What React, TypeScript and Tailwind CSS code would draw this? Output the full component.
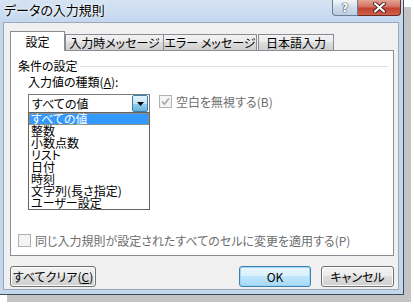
const items = ['すべての値', '整数', '小数点数', 'リスト', '日付', '時刻', '文字列(長さ指定)', 'ユーザー設定']

const CheckBox = ({ checked }: { checked?: boolean }) => (
  <div className="w-[13px] h-[13px] border border-[#b1b1b1] bg-[#f4f4f4] flex items-center justify-center shrink-0">
    {checked && (
      <svg width="9" height="9" viewBox="0 0 9 9">
        <path d="M1 4.5 L3.5 7 L8 1.5" fill="none" stroke="#a6a6a6" strokeWidth="1.6" />
      </svg>
    )}
  </div>
)

const Button = ({ children, width, primary }: { children: React.ReactNode; width: string; primary?: boolean }) => (
  <div
    className={`${width} h-[21px] rounded-[3px] border flex items-center justify-center text-[12px] leading-[12px] text-black ${
      primary
        ? 'border-[#3c7fb1] bg-[linear-gradient(#eaf6fd_0%,#d9f0fc_50%,#bee6fd_50%,#a7d9f5_100%)] shadow-[inset_0_0_0_1px_#9ed7f5]'
        : 'border-[#707070] bg-[linear-gradient(#f2f2f2_0%,#ebebeb_50%,#dddddd_50%,#cfcfcf_100%)] shadow-[inset_0_0_0_1px_#fcfcfc]'
    }`}
  >
    {children}
  </div>
)

export default function App() {
  return (
    <div className="w-[414px] h-[304px] bg-white overflow-hidden font-['Noto_Sans_CJK_JP','Noto_Sans',sans-serif] [font-feature-settings:'palt']">
      <div className="w-[404px] h-[295px] flex flex-col bg-[#c3d7ee] border-r border-b border-[#3f4a57] shadow-[7px_7px_0_#c4c4c4]">
        {/* title bar */}
        <div className="h-[22px] flex items-start justify-between pl-[4px] bg-[linear-gradient(#d5e3f3,#c3d7ee)]">
          <span className="pt-[2px] text-[13px] leading-[16px] text-black [text-shadow:0_0_5px_#fff,0_0_2px_#fff]">
            データの入力規則
          </span>
          <div className="flex mr-[2px]">
            <div className="w-[26px] h-[16px] rounded-bl-[4px] border border-t-0 border-[#6b7c93] bg-[linear-gradient(#f3f6fa,#d0dcec_50%,#bccde3)] flex items-center justify-center">
              <span className="text-[12px] leading-[12px] font-bold text-white font-['DejaVu_Sans',sans-serif] [text-shadow:0_0_1px_#3a4350,0_0_1px_#3a4350,0_0_1px_#3a4350]">
                ?
              </span>
            </div>
            <div className="w-[43px] h-[16px] rounded-br-[4px] border border-t-0 border-l-0 border-[#6b2a22] bg-[linear-gradient(#e7a394,#d0705f_45%,#c2412e_55%,#d0604c)] flex items-center justify-center">
              <svg width="15" height="11" viewBox="0 0 15 11">
                <path d="M3 1.5 L12 9.5 M12 1.5 L3 9.5" stroke="#4a2a26" strokeWidth="4" strokeLinecap="round" />
                <path d="M3 1.5 L12 9.5 M12 1.5 L3 9.5" stroke="#ffffff" strokeWidth="2" strokeLinecap="round" />
              </svg>
            </div>
          </div>
        </div>

        {/* client area */}
        <div className="ml-[3px] w-[396px] h-[268px] bg-[#f0f0f0] border border-[#9ba8b9] flex flex-col text-[12px] leading-[12px] text-black">
          {/* tabs */}
          <div className="flex items-end h-[27px] pl-[6px]">
            <div className="relative z-10 w-[55px] h-[20px] mb-[-1px] bg-white border border-b-0 border-[#898c95] flex items-center justify-center">
              設定
            </div>
            <div className="w-[99px] h-[16px] border border-b-0 border-[#898c95] bg-[linear-gradient(#f2f2f2,#ebebeb_50%,#dddddd_50%,#cfcfcf)] flex items-center justify-center">
              入力時メッセージ
            </div>
            <div className="w-[93px] h-[16px] border border-b-0 border-l-0 border-[#898c95] bg-[linear-gradient(#f2f2f2,#ebebeb_50%,#dddddd_50%,#cfcfcf)] flex items-center justify-center">
              エラー メッセージ
            </div>
            <div className="w-[76px] h-[16px] ml-[1px] border border-b-0 border-[#898c95] bg-[linear-gradient(#f2f2f2,#ebebeb_50%,#dddddd_50%,#cfcfcf)] flex items-center justify-center">
              日本語入力
            </div>
          </div>

          {/* tab panel */}
          <div className="ml-[6px] w-[384px] h-[206px] bg-white border border-[#898c95] flex flex-col">
            <div className="flex items-center mt-[9px] pl-[7px] pr-[5px] gap-[2px]">
              <span>条件の設定</span>
              <div className="flex-1 h-px bg-[#d5dfe5]" />
            </div>
            <div className="mt-[4px] pl-[17px]">
              入力値の種類(<span className="underline">A</span>):
            </div>
            <div className="mt-[6px] pl-[17px] flex items-start gap-[9px]">
              <div className="relative w-[122px] h-[19px] border border-[#7b7b7b] bg-white flex items-center justify-between pl-[3px] pr-px">
                <span>すべての値</span>
                <div className="w-[16px] h-[17px] rounded-[2px] border border-[#3c7fb1] bg-[linear-gradient(#e5f4fc,#c4e5f6_50%,#98d1ef_50%,#68b3db)] flex items-center justify-center">
                  <svg width="7" height="4" viewBox="0 0 7 4">
                    <path d="M0 0 H7 L3.5 4 Z" fill="#000" />
                  </svg>
                </div>
                {/* open list */}
                <div className="absolute left-[-1px] top-[17px] w-[122px] h-[98px] border border-[#646464] bg-white flex flex-col z-20">
                  {items.map((item, i) => (
                    <div
                      key={item}
                      className={`h-[12px] pl-[2px] leading-[12px] whitespace-nowrap ${
                        i === 0 ? 'bg-[#3399ff] text-white outline-1 outline-dotted outline-[#d4892e] -outline-offset-1' : ''
                      }`}
                    >
                      {item}
                    </div>
                  ))}
                </div>
              </div>
              <div className="flex items-center gap-[4px] mt-px text-[#6d6d6d]">
                <CheckBox checked />
                <span>空白を無視する(B)</span>
              </div>
            </div>
            <div className="mt-auto mb-[8px] pl-[7px] flex items-center gap-[4px] text-[#6d6d6d]">
              <CheckBox />
              <span>同じ入力規則が設定されたすべてのセルに変更を適用する(P)</span>
            </div>
          </div>

          {/* buttons */}
          <div className="mt-[10px] pl-[6px] pr-[4px] flex items-center">
            <Button width="w-[86px]">
              すべてクリア(<span className="underline">C</span>)
            </Button>
            <div className="flex-1" />
            <Button width="w-[72px]" primary>
              OK
            </Button>
            <div className="w-[10px]" />
            <Button width="w-[73px]">キャンセル</Button>
          </div>
        </div>
      </div>
    </div>
  )
}
